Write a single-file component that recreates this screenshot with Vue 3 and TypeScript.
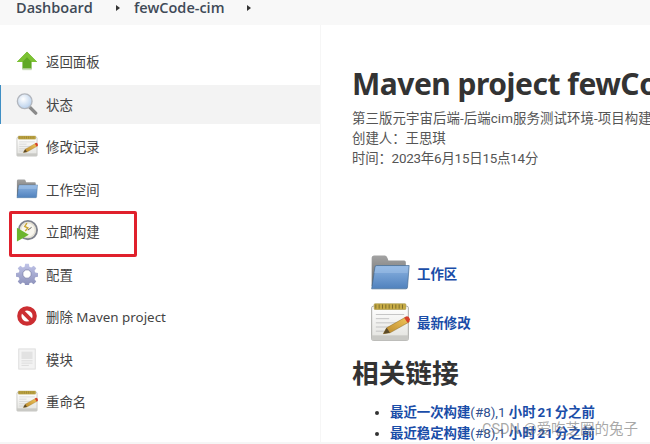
<script setup lang="ts">
type Item = { label: string; icon: string; active?: boolean }

const items: Item[] = [
  { label: '返回面板', icon: 'up' },
  { label: '状态', icon: 'search', active: true },
  { label: '修改记录', icon: 'notepad' },
  { label: '工作空间', icon: 'folder' },
  { label: '立即构建', icon: 'clock' },
  { label: '配置', icon: 'gear' },
  { label: '删除 Maven project', icon: 'no' },
  { label: '模块', icon: 'doc' },
  { label: '重命名', icon: 'notepad' },
]
</script>

<template>
  <div class="page">
    <svg width="0" height="0" class="defs">
      <defs>
        <linearGradient id="folderFront" x1="0" y1="0" x2="0" y2="1">
          <stop offset="0" stop-color="#8db4e2" />
          <stop offset="1" stop-color="#4f81bd" />
        </linearGradient>
        <linearGradient id="folderBack" x1="0" y1="0" x2="0" y2="1">
          <stop offset="0" stop-color="#a3a3a3" />
          <stop offset="1" stop-color="#666" />
        </linearGradient>
        <linearGradient id="paper" x1="0" y1="0" x2="0" y2="1">
          <stop offset="0" stop-color="#fff" />
          <stop offset="1" stop-color="#e2e2de" />
        </linearGradient>
        <linearGradient id="pencil" x1="0" y1="1" x2="1" y2="0">
          <stop offset="0" stop-color="#b8862a" />
          <stop offset="1" stop-color="#f2c75c" />
        </linearGradient>
        <radialGradient id="lens" cx="0.4" cy="0.35" r="0.7">
          <stop offset="0" stop-color="#fff" />
          <stop offset="1" stop-color="#b4cdea" />
        </radialGradient>
        <linearGradient id="gearFill" x1="0" y1="0" x2="0" y2="1">
          <stop offset="0" stop-color="#c0c4e8" />
          <stop offset="1" stop-color="#8a8fb8" />
        </linearGradient>
        <symbol id="i-up" viewBox="0 0 24 24">
          <path d="M12 2 L23 13 H17 V21 H7 V13 H1 Z" fill="#5fa823" />
          <path d="M12 2 L23 13 H17 L12 8 L7 13 H1 Z" fill="#7cc233" />
          <rect x="7" y="20" width="10" height="2" fill="#c9dcb8" />
        </symbol>
        <symbol id="i-search" viewBox="0 0 24 24">
          <path d="M14.5 15 L21.5 22" stroke="#8a8a8a" stroke-width="3.6" stroke-linecap="round" />
          <circle cx="9.5" cy="9" r="8" fill="url(#lens)" stroke="#b2b6bd" stroke-width="1.5" />
        </symbol>
        <symbol id="i-notepad" viewBox="0 0 48 48">
          <rect x="2" y="5" width="44" height="41" rx="2" fill="url(#paper)" stroke="#9a9a96" />
          <rect x="2" y="40" width="44" height="6" fill="#c9c9c5" />
          <rect x="5" y="2" width="38" height="7" rx="1" fill="#c7ab45" stroke="#9d8a36" stroke-width="0.6" />
          <path d="M7 3v5M11 3v5M15 3v5M19 3v5M23 3v5M27 3v5M31 3v5M35 3v5M39 3v5" stroke="#6f6328" stroke-width="1" />
          <path d="M7 15h34M7 20h16M7 25h30M7 30h18M7 35h12" stroke="#bcbcbc" stroke-width="1" />
          <path d="M16 38 L20 31 L43 18 L47 24 L24 37 Z" fill="url(#pencil)" stroke="#8d6a20" stroke-width="0.6" />
          <path d="M16 38 L20 31 L24 37 Z" fill="#5a4a2a" />
          <path d="M41 19 L44 17 Q47 17 48 21 L47 24 L45 25 Z" fill="#d6402c" />
        </symbol>
        <symbol id="i-folder" viewBox="0 0 48 48">
          <path d="M2 6 Q2 3 5 3 H18 Q20 3 21 6 L22 9 H41 Q43 9 43 11 V40 H2 Z" fill="url(#folderBack)" />
          <path d="M6 17 Q6 15 8 15 H47 L45 41 Q45 43 43 43 H2 Z" fill="url(#folderFront)" stroke="#41688f" stroke-width="0.8" />
          <path d="M7 16 H46 L45 24 H5 Z" fill="#a9c8ec" opacity="0.45" />
        </symbol>
        <symbol id="i-clock" viewBox="0 0 24 24">
          <circle cx="13" cy="11" r="10" fill="#e9e6da" stroke="#7f828d" stroke-width="2" />
          <circle cx="13" cy="11" r="7.8" fill="#f8f6ee" stroke="#d4d0c0" stroke-width="0.6" />
          <path d="M12 3.5 L9.5 7 L13 8.8 L10 12" fill="none" stroke="#c9a532" stroke-width="1.5" />
          <path d="M13 11 L17 8" stroke="#555" stroke-width="1" />
          <path d="M1 8.5 L14 16 L1 23.5 Z" fill="#6cb52d" />
        </symbol>
        <symbol id="i-gear" viewBox="0 0 24 24">
          <path fill="url(#gearFill)" d="M10 0.8h4l.6 3.2 2 .8 2.7-1.9 2.8 2.8-1.9 2.7.8 2 3 .6v4l-3 .6-.8 2 1.9 2.7-2.8 2.8-2.7-1.9-2 .8-.6 3.2h-4l-.6-3.2-2-.8-2.7 1.9-2.8-2.8 1.9-2.7-.8-2-3-.6v-4l3-.6.8-2-1.9-2.7 2.8-2.8 2.7 1.9 2-.8z" />
          <circle cx="12" cy="12" r="4.6" fill="#fff" stroke="#7a7ea6" stroke-width="0.8" />
        </symbol>
        <symbol id="i-no" viewBox="0 0 24 24">
          <circle cx="12" cy="12" r="8.4" fill="#fff" stroke="#cc2e32" stroke-width="4.6" />
          <path d="M6.5 6.5 L17.5 17.5" stroke="#cc2e32" stroke-width="4.2" />
        </symbol>
        <symbol id="i-doc" viewBox="0 0 24 24">
          <rect x="3" y="1" width="18" height="22" fill="#f3f3f3" stroke="#dcdcdc" />
          <rect x="6" y="4" width="12" height="8" fill="#e2e2e2" />
          <path d="M6 14h12M6 16.5h12M6 19h8" stroke="#dadada" />
        </symbol>
      </defs>
    </svg>

    <header class="breadcrumb">
      <span class="crumb first">Dashboard</span>
      <span class="arrow"></span>
      <span class="crumb">fewCode-cim</span>
      <span class="arrow"></span>
    </header>

    <div class="body">
      <aside class="side">
        <div v-for="item in items" :key="item.label" class="task" :class="{ active: item.active }">
          <svg class="task-icon"><use :href="'#i-' + item.icon" /></svg>
          <span>{{ item.label }}</span>
        </div>
      </aside>

      <main class="main">
        <h1>Maven project fewCode-cim</h1>
        <div class="desc">
          <div class="line-wide">第三版元宇宙后端-后端cim服务测试环境-项目构建</div>
          <div>创建人：王思琪</div>
          <div class="line-tight">时间：2023年6月15日15点14分</div>
        </div>

        <div class="permalinks">
          <div class="big-link">
            <svg class="big-icon"><use href="#i-folder" /></svg>
            <a>工作区</a>
          </div>
          <div class="big-link">
            <svg class="big-icon"><use href="#i-notepad" /></svg>
            <a>最新修改</a>
          </div>
        </div>

        <h2>相关链接</h2>
        <ul>
          <li><a>最近一次构建</a>(#8),1 <a>小时 21 分之前</a></li>
          <li><a>最近稳定构建</a>(#8),1 <a>小时 21 分之前</a></li>
        </ul>
      </main>
    </div>

    <div class="marker"></div>
    <div class="watermark">CSDN @爱吃芝圈的兔子</div>
  </div>
</template>

<style>
html, body { margin: 0; overflow: hidden; background: #fff; }
</style>

<style scoped>
.page {
  position: relative;
  width: 650px;
  height: 444px;
  overflow: hidden;
  background: #fff;
  color: #444;
  font-family: Roboto, "Noto Sans CJK SC", sans-serif;
  font-size: 13.4px;
}
.defs { position: absolute; }
.breadcrumb {
  height: 25px;
  background: #f8f8f8;
  display: flex;
  align-items: center;
  padding-left: 16px;
  box-sizing: border-box;
  padding-bottom: 10px;
  font-family: "Open Sans", sans-serif;
}
.crumb {
  font-weight: 600;
  font-size: 14.5px;
  line-height: 15px;
  color: #3f4a57;
}
.arrow {
  width: 0;
  height: 0;
  border-left: 4px solid #333;
  border-top: 3.5px solid transparent;
  border-bottom: 3.5px solid transparent;
  margin: 0 14px 0 23px;
}
.body {
  display: flex;
  height: 417px;
  border-bottom: 2px solid #f6f6f6;
}
.side {
  width: 321px;
  flex-shrink: 0;
  box-sizing: border-box;
  padding-top: 15.2px;
  border-right: 1px solid #f6f6f6;
  display: flex;
  flex-direction: column;
}
.task {
  height: 42.5px;
  display: flex;
  align-items: center;
  padding-left: 16px;
  gap: 8px;
  font-family: "Noto Sans", "Noto Sans CJK SC", sans-serif;
  color: #444;
}
.task.active {
  background: #f3f3f3;
  box-shadow: inset 1px 0 0 #3f8fc4;
  height: 39px;
  margin: 2px 0 1.5px;
}
.task-icon {
  width: 22px;
  height: 22px;
  flex-shrink: 0;
}
.main {
  flex: 1;
  min-width: 0;
  padding: 39px 0 0 31px;
  white-space: nowrap;
}
h1 {
  margin: 0;
  font-family: "Noto Sans", sans-serif;
  font-size: 30px;
  letter-spacing: -0.5px;
  line-height: 40px;
  font-weight: 700;
  color: #333;
}
.desc {
  line-height: 20px;
  margin-top: 5px;
  color: #555;
}
.line-wide { letter-spacing: 0.1px; }
.line-tight { letter-spacing: -0.2px; }
.permalinks {
  margin: 81px 0 0 18px;
}
.big-link {
  display: flex;
  align-items: center;
  gap: 7px;
  height: 46px;
  margin-bottom: 3px;
}
.big-icon {
  width: 40px;
  height: 40px;
  flex-shrink: 0;
}
a {
  color: #1a4da8;
  font-weight: 700;
}
h2 {
  margin: 11px 0 0;
  font-size: 26.7px;
  line-height: 36px;
  font-weight: 700;
  color: #333;
}
ul {
  margin: 10px 0 0;
  padding: 0 0 0 38px;
  line-height: 21px;
}
li { color: #2f4f8f; }
li a { word-spacing: -1.5px; }
li::marker { color: #333; }
.marker {
  position: absolute;
  left: 9px;
  top: 211px;
  width: 128px;
  height: 46px;
  box-sizing: border-box;
  border: 3px solid #e0202c;
  border-radius: 2px;
}
.watermark {
  position: absolute;
  left: 482px;
  top: 417px;
  font-size: 14.5px;
  color: rgba(110, 110, 110, 0.6);
  white-space: nowrap;
}
</style>
